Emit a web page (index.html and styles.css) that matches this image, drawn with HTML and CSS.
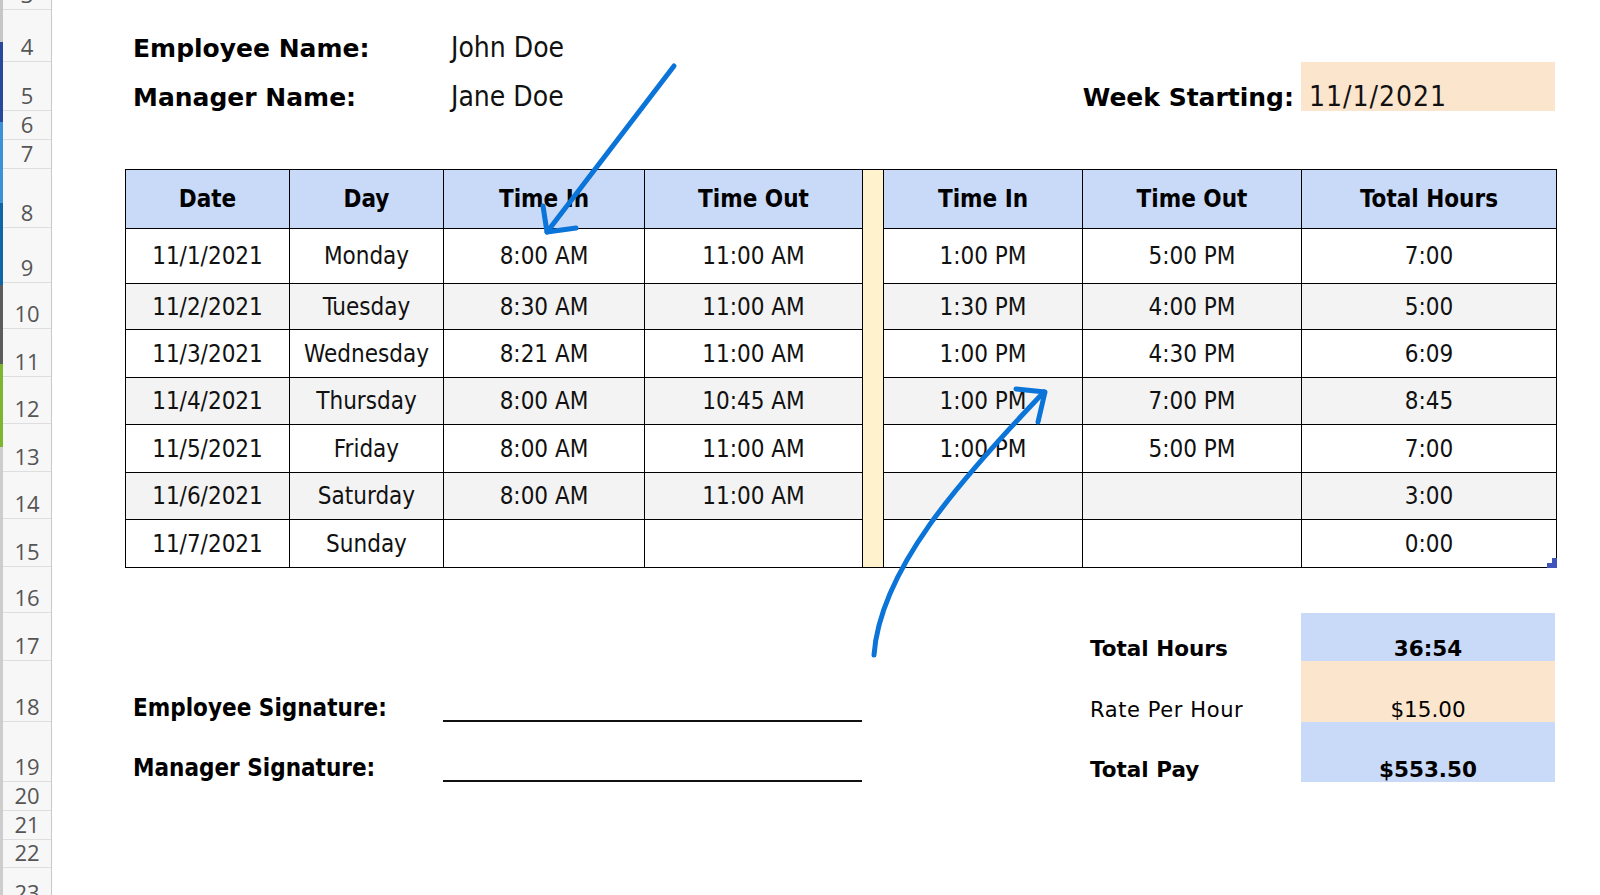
FILE: index.html
```html
<!DOCTYPE html>
<html lang="en">
<head>
<meta charset="utf-8">
<title>Weekly Timesheet</title>
<link rel="stylesheet" href="styles.css">
</head>
<body>
<div class="screen">
  <div class="strip"></div>

  <div class="rowhdr">
    <div class="rh">3</div>
    <div class="rh">4</div>
    <div class="rh">5</div>
    <div class="rh">6</div>
    <div class="rh">7</div>
    <div class="rh">8</div>
    <div class="rh">9</div>
    <div class="rh">10</div>
    <div class="rh">11</div>
    <div class="rh">12</div>
    <div class="rh">13</div>
    <div class="rh">14</div>
    <div class="rh">15</div>
    <div class="rh">16</div>
    <div class="rh">17</div>
    <div class="rh">18</div>
    <div class="rh">19</div>
    <div class="rh">20</div>
    <div class="rh">21</div>
    <div class="rh">22</div>
    <div class="rh">23</div>
  </div>

  <div class="sheet">
    <div class="gap-top"></div>

    <div class="info">
      <div class="cell lbl r1 c-bc">Employee Name:</div>
      <div class="cell name r1 c-d">John Doe</div>
      <div class="cell lbl r2 c-bc">Manager Name:</div>
      <div class="cell name r2 c-d">Jane Doe</div>
      <div class="cell lbl right r2 c-fg">Week Starting:</div>
      <div class="cell week peach r2 c-h">11/1/2021</div>
    </div>

    <div class="gap-mid"></div>

    <table class="ts">
      <colgroup>
        <col class="w-date"><col class="w-day"><col class="w-in1"><col class="w-out1">
        <col class="w-sep"><col class="w-in2"><col class="w-out2"><col class="w-tot">
      </colgroup>
      <tbody>
        <tr class="head">
          <th>Date</th><th>Day</th><th>Time In</th><th>Time Out</th>
          <td class="sep" rowspan="8"></td>
          <th>Time In</th><th>Time Out</th><th>Total Hours</th>
        </tr>
        <tr>
          <td>11/1/2021</td><td>Monday</td><td>8:00 AM</td><td>11:00 AM</td>
          <td>1:00 PM</td><td>5:00 PM</td><td>7:00</td>
        </tr>
        <tr class="alt">
          <td>11/2/2021</td><td>Tuesday</td><td>8:30 AM</td><td>11:00 AM</td>
          <td>1:30 PM</td><td>4:00 PM</td><td>5:00</td>
        </tr>
        <tr>
          <td>11/3/2021</td><td>Wednesday</td><td>8:21 AM</td><td>11:00 AM</td>
          <td>1:00 PM</td><td>4:30 PM</td><td>6:09</td>
        </tr>
        <tr class="alt">
          <td>11/4/2021</td><td>Thursday</td><td>8:00 AM</td><td>10:45 AM</td>
          <td>1:00 PM</td><td>7:00 PM</td><td>8:45</td>
        </tr>
        <tr>
          <td>11/5/2021</td><td>Friday</td><td>8:00 AM</td><td>11:00 AM</td>
          <td>1:00 PM</td><td>5:00 PM</td><td>7:00</td>
        </tr>
        <tr class="alt">
          <td>11/6/2021</td><td>Saturday</td><td>8:00 AM</td><td>11:00 AM</td>
          <td></td><td></td><td>3:00</td>
        </tr>
        <tr>
          <td>11/7/2021</td><td>Sunday</td><td></td><td></td>
          <td></td><td></td><td class="last">0:00<span class="handle"></span></td>
        </tr>
      </tbody>
    </table>

    <div class="gap-low"></div>

    <div class="summary">
      <div class="cell tot-b r1 c-g">Total Hours</div>
      <div class="cell val-b blue r1 c-h">36:54</div>

      <div class="cell sig r2 c-bc">Employee Signature:</div>
      <div class="sigline r2 c-de"></div>
      <div class="cell tot r2 c-g">Rate Per Hour</div>
      <div class="cell val peach r2 c-h">$15.00</div>

      <div class="cell sig r3 c-bc">Manager Signature:</div>
      <div class="sigline r3 c-de"></div>
      <div class="cell tot-b r3 c-g">Total Pay</div>
      <div class="cell val-b blue r3 c-h">$553.50</div>
    </div>
  </div>

  <svg class="arrows" width="1600" height="895" viewBox="0 0 1600 895" aria-hidden="true">
    <g fill="none" stroke="#0b74d8" stroke-width="5" stroke-linecap="round" stroke-linejoin="round">
      <path d="M674 66 L547 232"/>
      <path d="M543 206 L547 232 L576 228"/>
      <path d="M874 655 C 880 570, 960 480, 1044 392"/>
      <path d="M1016 389 L1045 392 L1038 422"/>
    </g>
  </svg>
</div>
</body>
</html>
```

FILE: styles.css
```css
* { box-sizing: border-box; }

html, body {
  margin: 0;
  padding: 0;
  background: #ffffff;
}

.screen {
  position: relative;
  width: 1600px;
  height: 895px;
  overflow: hidden;
  display: flex;
  align-items: flex-start;
  background: #ffffff;
  color: #000;
}

/* thin coloured strip of the window behind */
.strip {
  width: 3px;
  height: 895px;
  flex: none;
  background: linear-gradient(to bottom,
    #c6c6c6 0 42px,
    #27489b 42px 122px,
    #3b92d6 122px 203px,
    #0f66a7 203px 285px,
    #5c5c5c 285px 364px,
    #7db62e 364px 447px,
    #cdcdcd 447px 895px);
}

/* spreadsheet row header */
.rowhdr {
  width: 49px;
  flex: none;
  display: grid;
  grid-template-rows: 10px 52px 49px 29px 29px 59px 55px 46px 48px 47px 48px 47px 48px 46px 48px 61px 60px 29px 29px 28px 40px;
  background: #f7f7f7;
  border-right: 1px solid #c8c8c8;
}

.rh {
  display: flex;
  align-items: flex-end;
  justify-content: center;
  border-bottom: 1px solid #dedede;
  padding-bottom: 4px;
  font-family: "Open Sans", "Noto Sans", sans-serif;
  font-size: 22px;
  line-height: 22px;
  color: #555555;
}
.rh:first-child,
.rh:last-child { overflow: hidden; }

/* sheet area */
.sheet {
  flex: none;
  width: 1548px;
  display: flex;
  flex-direction: column;
}

.gap-top { height: 10px; }
.gap-mid { height: 58px; }
.gap-low { height: 45px; }

.info,
.summary {
  display: grid;
  grid-template-columns: 73px 164px 154px 201px 218px 21px 199px 219px 254px;
}
.info { grid-template-rows: 52px 49px; }
.summary { grid-template-rows: 48px 61px 60px; }

.r1 { grid-row: 1; }
.r2 { grid-row: 2; }
.r3 { grid-row: 3; }
.c-bc { grid-column: 2 / 4; }
.c-d  { grid-column: 4 / 5; }
.c-de { grid-column: 4 / 6; }
.c-fg { grid-column: 7 / 9; }
.c-g  { grid-column: 8 / 9; }
.c-h  { grid-column: 9 / 10; }

.cell {
  display: flex;
  align-items: flex-end;
  padding: 0 7px 0 8px;
  line-height: 1.1;
  white-space: nowrap;
}
.right { justify-content: flex-end; }

.lbl {
  font-family: "DejaVu Sans", Verdana, sans-serif;
  font-weight: bold;
  font-size: 25px;
}

.name {
  font-family: "DejaVu Sans Condensed", "DejaVu Sans", sans-serif;
  font-stretch: condensed;
  font-size: 28px;
  line-height: 0.96;
  color: #111;
}

.week {
  font-family: "DejaVu Sans Condensed", "DejaVu Sans", sans-serif;
  font-stretch: condensed;
  font-size: 28px;
  line-height: 0.96;
  letter-spacing: 1px;
  color: #111;
}

.peach { background: #fce5cd; }
.blue  { background: #c9daf8; }

/* time sheet table */
.ts {
  margin-left: 73px;
  width: 1431px;
  table-layout: fixed;
  border-collapse: collapse;
  font-family: "DejaVu Sans Condensed", "DejaVu Sans", sans-serif;
  font-stretch: condensed;
  font-size: 24px;
}

.w-date { width: 164px; }
.w-day  { width: 154px; }
.w-in1  { width: 201px; }
.w-out1 { width: 218px; }
.w-sep  { width: 21px; }
.w-in2  { width: 199px; }
.w-out2 { width: 219px; }
.w-tot  { width: 255px; }

.ts th,
.ts td {
  border: 1px solid #000;
  padding: 0;
  text-align: center;
  vertical-align: middle;
  white-space: nowrap;
}

.ts td { color: #111; }

.ts th {
  background: #c9daf8;
  font-weight: bold;
}

.ts tr.head { height: 59px; }
.ts tr:nth-child(2) { height: 55px; }
.ts tr:nth-child(3) { height: 46px; }
.ts tr:nth-child(4) { height: 48px; }
.ts tr:nth-child(5) { height: 47px; }
.ts tr:nth-child(6) { height: 48px; }
.ts tr:nth-child(7) { height: 47px; }
.ts tr:nth-child(8) { height: 48px; }

.ts tr.alt td { background: #f3f3f3; }
.ts td.sep { background: #fff2cc; }

.ts td.last { position: relative; }

/* spreadsheet fill handle at the selection corner */
.handle {
  position: absolute;
  right: -1px;
  bottom: -1px;
  width: 10px;
  height: 10px;
  background: #3f55b9;
  clip-path: polygon(100% 0, 100% 100%, 0 100%, 0 50%, 50% 50%, 50% 0);
}

/* summary block */
.sig {
  font-family: "DejaVu Sans Condensed", "DejaVu Sans", sans-serif;
  font-stretch: condensed;
  font-weight: bold;
  font-size: 24px;
  padding-bottom: 1px;
}

.sigline {
  border-bottom: 2px solid #111;
}

.tot,
.tot-b,
.val,
.val-b {
  font-family: "DejaVu Sans", Verdana, sans-serif;
  font-size: 21.5px;
  padding-bottom: 0;
}
.tot {
  font-size: 21px;
  letter-spacing: 0.6px;
}
.tot-b, .val-b { font-weight: bold; }
.val, .val-b {
  justify-content: center;
  padding-left: 0;
  padding-right: 0;
}

.arrows {
  position: absolute;
  left: 0;
  top: 0;
  pointer-events: none;
}
```
